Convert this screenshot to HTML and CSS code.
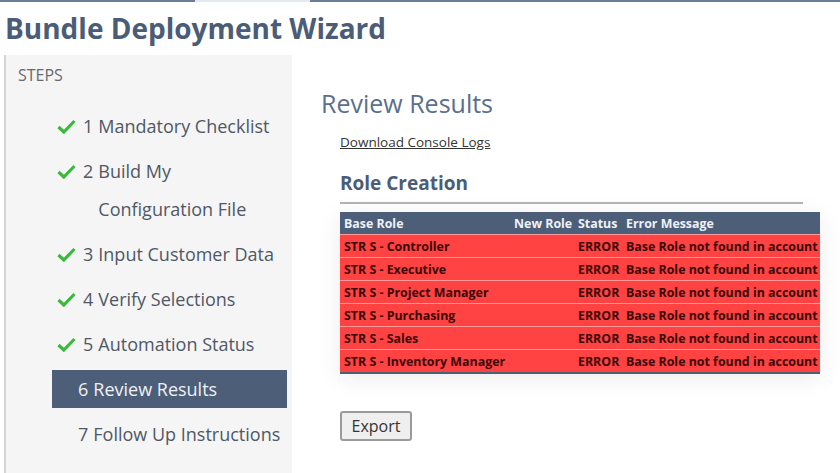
FILE: index.html
```html
<!DOCTYPE html>
<html lang="en">
<head>
    <meta charset="UTF-8">
    <title>Bundle Deployment Wizard</title>

    <link rel="stylesheet" href="styles.css">

</head>
<body>

<div class="top-bar">
    <div class="top-bar-dark first"></div>
    <div class="top-bar-light"></div>
    <div class="top-bar-dark"></div>
</div>

<h1 class="page-title">Bundle Deployment Wizard</h1>

<div class="wizard">
    <div class="steps-panel">
        <div class="steps-caption">STEPS</div>
        <ul class="steps-list">
            <li class="step done">
                <svg class="check" viewBox="0 0 19 15"><path d="M1.5 8 L6.8 13 L17.5 2"/></svg>
                <span class="step-num">1</span><span class="step-label">Mandatory Checklist</span>
            </li>
            <li class="step done">
                <svg class="check" viewBox="0 0 19 15"><path d="M1.5 8 L6.8 13 L17.5 2"/></svg>
                <span class="step-num">2</span><span class="step-label">Build My Configuration File</span>
            </li>
            <li class="step done">
                <svg class="check" viewBox="0 0 19 15"><path d="M1.5 8 L6.8 13 L17.5 2"/></svg>
                <span class="step-num">3</span><span class="step-label">Input Customer Data</span>
            </li>
            <li class="step done">
                <svg class="check" viewBox="0 0 19 15"><path d="M1.5 8 L6.8 13 L17.5 2"/></svg>
                <span class="step-num">4</span><span class="step-label">Verify Selections</span>
            </li>
            <li class="step done">
                <svg class="check" viewBox="0 0 19 15"><path d="M1.5 8 L6.8 13 L17.5 2"/></svg>
                <span class="step-num">5</span><span class="step-label">Automation Status</span>
            </li>
            <li class="step active">
                <span class="step-num">6</span><span class="step-label">Review Results</span>
            </li>
            <li class="step todo">
                <span class="step-num">7</span><span class="step-label">Follow Up Instructions</span>
            </li>
        </ul>
    </div>

    <div class="main-panel">
        <h2 class="section-title">Review Results</h2>
        <div class="section-body">
            <a class="console-link" href="#">Download Console Logs</a>

            <h3 class="group-title">Role Creation</h3>

            <table class="result-table">
                <colgroup>
                    <col class="col-base">
                    <col class="col-new">
                    <col class="col-status">
                    <col class="col-msg">
                </colgroup>
                <thead>
                    <tr>
                        <th>Base Role</th>
                        <th class="head-new">New Role</th>
                        <th>Status</th>
                        <th>Error Message</th>
                    </tr>
                </thead>
                <tbody>
                    <tr class="row-error"><td>STR S - Controller</td><td></td><td>ERROR</td><td>Base Role not found in account</td></tr>
                    <tr class="row-error"><td>STR S - Executive</td><td></td><td>ERROR</td><td>Base Role not found in account</td></tr>
                    <tr class="row-error"><td>STR S - Project Manager</td><td></td><td>ERROR</td><td>Base Role not found in account</td></tr>
                    <tr class="row-error"><td>STR S - Purchasing</td><td></td><td>ERROR</td><td>Base Role not found in account</td></tr>
                    <tr class="row-error"><td>STR S - Sales</td><td></td><td>ERROR</td><td>Base Role not found in account</td></tr>
                    <tr class="row-error"><td>STR S - Inventory Manager</td><td></td><td>ERROR</td><td>Base Role not found in account</td></tr>
                </tbody>
            </table>

            <button class="export-button">Export</button>
        </div>
    </div>
</div>

</body>
</html>
```

FILE: styles.css
```css
body {
    margin: 0;
    font-family: "Open Sans", "Liberation Sans", sans-serif;
    background: #ffffff;
    overflow: hidden;
}

.top-bar {
    display: flex;
    height: 2px;
}
.top-bar-dark {
    flex: 1;
    background: #6d7d99;
}
.top-bar-dark.first {
    flex: 0 0 195px;
}
.top-bar-light {
    flex: 0 0 115px;
    background: #e4e8f0;
}

.page-title {
    margin: 0;
    padding: 8px 5px 4px;
    font-size: 28px;
    line-height: 36px;
    font-weight: 700;
    color: #4b5c77;
}

.wizard {
    display: flex;
    margin-top: 5px;
    height: 430px;
}

.steps-panel {
    width: 286px;
    margin-left: 4px;
    border-left: 2px solid #d4d4d4;
    background: #f5f5f5;
}

.steps-caption {
    padding: 10px 0 0 12px;
    font-size: 16px;
    line-height: 20px;
    color: #666a70;
}

.steps-list {
    list-style: none;
    margin: 22px 5px 0 46px;
    padding: 0;
}

.step {
    display: flex;
    align-items: flex-start;
    margin-bottom: 7px;
    font-size: 18px;
    line-height: 38px;
    color: #4f5866;
}
.step.done {
    padding-left: 5px;
}
.step.active,
.step.todo {
    padding-left: 26px;
}
.step.active {
    background: #4d5e79;
    color: #eef1f5;
}

.check {
    flex: 0 0 19px;
    width: 19px;
    height: 15px;
    margin: 12px 7px 0 0;
}
.check path {
    fill: none;
    stroke: #3cb93c;
    stroke-width: 3.2;
}

.step-num {
    margin-right: 5px;
}

.main-panel {
    flex: 1;
    padding-left: 29px;
}

.section-title {
    margin: 33px 0 0;
    font-size: 25px;
    line-height: 31px;
    font-weight: 400;
    color: #5b6f8d;
}

.section-body {
    padding-left: 19px;
}

.console-link {
    display: inline-block;
    margin-top: 14px;
    font-size: 13.5px;
    line-height: 18px;
    color: #333333;
}

.group-title {
    width: 463px;
    margin: 19px 0 0;
    padding-bottom: 7px;
    border-bottom: 2px solid #b4b4b4;
    font-size: 19px;
    line-height: 24px;
    font-weight: 700;
    color: #4b5c77;
}

.result-table {
    width: 480px;
    margin-top: 8px;
    table-layout: fixed;
    border-collapse: collapse;
    font-size: 12.4px;
    font-weight: 700;
    box-shadow: 0 4px 22px rgba(0, 0, 0, 0.08);
    border-bottom: 2px solid #4d5e79;
}
.col-base { width: 170px; }
.col-new { width: 64px; }
.col-status { width: 48px; }
.col-msg { width: 198px; }

.result-table th {
    height: 22px;
    padding: 0 4px;
    background: #4d5e79;
    color: #eef2f8;
    text-align: left;
    font-weight: 700;
    white-space: nowrap;
}
.result-table th.head-new {
    text-align: right;
}

.row-error td {
    height: 22px;
    padding: 0 4px;
    background: #ff4242;
    color: #3a0808;
    border-top: 1px solid #ff9a9a;
    white-space: nowrap;
    overflow: visible;
}

.export-button {
    display: block;
    margin-top: 37px;
    width: 72px;
    height: 30px;
    padding: 0;
    border: 2px solid #9a9a9a;
    border-radius: 3px;
    background: #efefef;
    font-family: "Open Sans", "Liberation Sans", sans-serif;
    font-size: 16px;
    color: #333333;
}
```
